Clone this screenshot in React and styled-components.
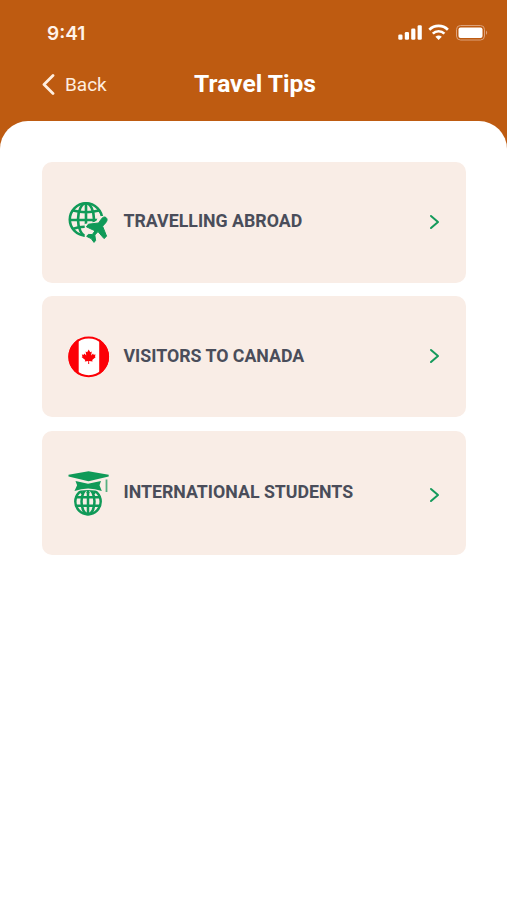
import React from 'react';
import styled, { createGlobalStyle } from 'styled-components';

const GlobalStyle = createGlobalStyle`
  * {
    box-sizing: border-box;
  }

  body {
    margin: 0;
    background: #be5b11;
    font-family: Roboto, "Liberation Sans", sans-serif;
  }
`;

const Screen = styled.div`
  display: flex;
  flex-direction: column;
  width: 507px;
  height: 900px;
  overflow: hidden;
  background: #be5b11;
`;

const StatusBar = styled.div`
  display: flex;
  align-items: center;
  justify-content: space-between;
  height: 64px;
  padding: 2px 18px 0 47px;
`;

const Time = styled.span`
  font-family: Inter, "Liberation Sans", sans-serif;
  font-size: 19px;
  font-weight: 600;
  color: #fff3ea;
`;

const StatusIcons = styled.svg`
  display: block;
  width: 92px;
  height: 20px;
  margin-bottom: 4px;
`;

const NavBar = styled.header`
  display: grid;
  grid-template-columns: 1fr auto 1fr;
  align-items: center;
  height: 57px;
  padding: 0 39px 16px 42px;
`;

const BackButton = styled.button`
  display: flex;
  align-items: center;
  gap: 10px;
  padding: 0;
  border: 0;
  background: none;
  color: #ffeee0;
  font-family: inherit;
  font-size: 19px;
  line-height: 24px;
`;

const Title = styled.h1`
  margin: 0 0 2px;
  color: #fff;
  font-size: 24.6px;
  font-weight: 700;
  line-height: 28px;
`;

const Content = styled.main`
  flex: 1;
  display: flex;
  flex-direction: column;
  gap: 13.5px;
  padding: 40.5px 41px 0 42px;
  border-radius: 28px 28px 0 0;
  background: #fff;
`;

const Card = styled.a`
  display: flex;
  align-items: center;
  height: ${props => props.$height}px;
  padding: 0 25px 0 26px;
  border-radius: 10px;
  background: #f9ede6;
`;

const CardIcon = styled.svg`
  display: block;
  width: 42px;
  height: 46px;
  margin-top: ${props => props.$shift || 0}px;
`;

const CardLabel = styled.span`
  flex: 1;
  margin: -2px 0 0 13.5px;
  color: #4a4d5a;
  font-size: 17.75px;
  font-weight: 700;
  line-height: 22px;
`;

const Arrow = styled.svg`
  display: block;
  width: 12px;
  height: 16px;
  margin-top: ${props => props.$shift || 0}px;
`;

const TravelIcon = () => (
  <CardIcon viewBox="0 0 42 46" $shift={-1}>
    <g fill="none" stroke="#109a58" strokeWidth="2.6">
      <circle cx="18" cy="20.5" r="16.2" />
      <ellipse cx="18" cy="20.5" rx="8" ry="16.2" />
      <path d="M18 4.5v21M2 21h31M5 11.5q13 3.5 26 0M4.5 30q11-4 20-1" />
    </g>
    <path d="M16.7 25L28 22.5l2.5-5.2L42 16.500V46H16.7z" fill="#f9ede6" />
    <path
      d="M38 18.500c1.800 1.600 1.200 3.600-.4 5.400l-3 3.300L38.600 37.200 36 39.600l-6-7-3.200 3.400.8 5.500-1.600 1.900-2.800-3.800-4.500-2.200 1.600-2 4 .2 2.700-3.800-8.600-4 2-2.600L30.600 24l2.400-3.500c1.300-2 3.300-3.300 5-2z"
      fill="#109a58"
      stroke="#109a58"
      strokeLinejoin="round"
    />
  </CardIcon>
);

const CanadaIcon = () => (
  <CardIcon viewBox="0 0 42 46">
    <clipPath id="flag">
      <circle cx="20.7" cy="22.8" r="20.3" />
    </clipPath>
    <circle cx="20.7" cy="22.8" r="19.5" fill="#fff" />
    <path d="M0 2h10.700v42H0zM31.200 2H42v42H31.200z" fill="#fc0006" clipPath="url(#flag)" />
    <circle cx="20.7" cy="22.8" r="19.4" fill="none" stroke="#fc0006" strokeWidth="2" />
    <path
      d="M20.700 15.600l1.500 2.700 1.600-.8-.7 4 2-2 .5 1.200 2-.3-.7 2.200.9.500-3.600 3 .4 1.400-3.500-.5.100 3.100h-1l.1-3.100-3.500.5.400-1.400-3.600-3 .9-.5-.7-2.200 2 .3.500-1.200 2 2-.7-4 1.600.8z"
      fill="#fc0006"
    />
  </CardIcon>
);

const StudentIcon = () => (
  <CardIcon viewBox="0 0 42 46">
    <g fill="none" stroke="#109a58" strokeWidth="2.5">
      <circle cx="20" cy="31.6" r="12.7" />
      <ellipse cx="20" cy="31.6" rx="6.5" ry="12.7" />
      <path d="M20 20v24M7.500 27.300h25M7.500 35.700h25" />
    </g>
    <path d="M6 12h28v9.500q-14-3-28 0z" fill="#f9ede6" />
    <g fill="#109a58">
      <path d="M7.500 11L20 13.700 33 11l-1.500 4.300 2.300 5.700q-13.800-5-27.300 0l2.600-5.700z" />
      <circle cx="14" cy="22.8" r="1.5" />
      <circle cx="20" cy="22.3" r="1.5" />
      <circle cx="26" cy="22.8" r="1.5" />
      <path
        d="M.500 4.700L20.500 1.300l20.200 3.400v1.700L20.500 11.300.500 6.400z"
        stroke="#f9ede6"
        strokeWidth="1"
        paintOrder="stroke"
      />
    </g>
    <path d="M38.500 9.500v12.500" stroke="#55af80" strokeWidth="1.8" />
  </CardIcon>
);

const SignalIcons = () => (
  <StatusIcons viewBox="0 0 92 20" fill="#fff">
    <rect x="1.3" y="13.5" width="4.2" height="5.3" rx="1.3" />
    <rect x="7.8" y="11" width="4.2" height="7.8" rx="1.3" />
    <rect x="14.2" y="7.5" width="4.2" height="11.3" rx="1.3" />
    <rect x="20.6" y="4.3" width="4.2" height="14.5" rx="1.3" />
    <g fill="none" stroke="#fff" strokeWidth="2.7">
      <path d="M32.300 8.700a13.300 13.300 0 0 1 18.600 0M35.800 12.600a8.300 8.300 0 0 1 11.600 0" />
    </g>
    <path d="M38.400 15.700q3.200-2.500 6.400 0l-3.200 3.200z" />
    <rect x="59.5" y="4.5" width="28" height="14.5" rx="4" fill="none" stroke="#dda27b" />
    <rect x="61.5" y="6.5" width="24" height="10.5" rx="2" />
    <path d="M89 9.500q2.400 2.200 0 4.500z" fill="#dda27b" />
  </StatusIcons>
);

const items = [
  { label: 'TRAVELLING ABROAD', Icon: TravelIcon, height: 121, arrowShift: -1 },
  { label: 'VISITORS TO CANADA', Icon: CanadaIcon, height: 121, arrowShift: -1 },
  { label: 'INTERNATIONAL STUDENTS', Icon: StudentIcon, height: 124, arrowShift: 5 },
];

const TipCard = ({ item }) => {
  const { Icon, label, height, arrowShift } = item;
  return (
    <Card $height={height}>
      <Icon />
      <CardLabel>{label}</CardLabel>
      <Arrow viewBox="0 0 12 16" $shift={arrowShift}>
        <path
          d="M2 2l7 6-7 6"
          fill="none"
          stroke="#149a5b"
          strokeWidth="2"
          strokeLinecap="round"
          strokeLinejoin="round"
        />
      </Arrow>
    </Card>
  );
};

const App = () => (
  <>
    <GlobalStyle />
    <Screen>
      <StatusBar>
        <Time>9:41</Time>
        <SignalIcons />
      </StatusBar>
      <NavBar>
        <BackButton>
          <svg width="13" height="21" viewBox="0 0 13 21">
            <path
              d="M11 1.500L2 10.500l9 9"
              fill="none"
              stroke="#ffeee0"
              strokeWidth="2.8"
              strokeLinecap="round"
              strokeLinejoin="round"
            />
          </svg>
          Back
        </BackButton>
        <Title>Travel Tips</Title>
      </NavBar>
      <Content>
        {items.map(item => (<TipCard key={item.label} item={item} />))}
      </Content>
    </Screen>
  </>
);

export default App;
